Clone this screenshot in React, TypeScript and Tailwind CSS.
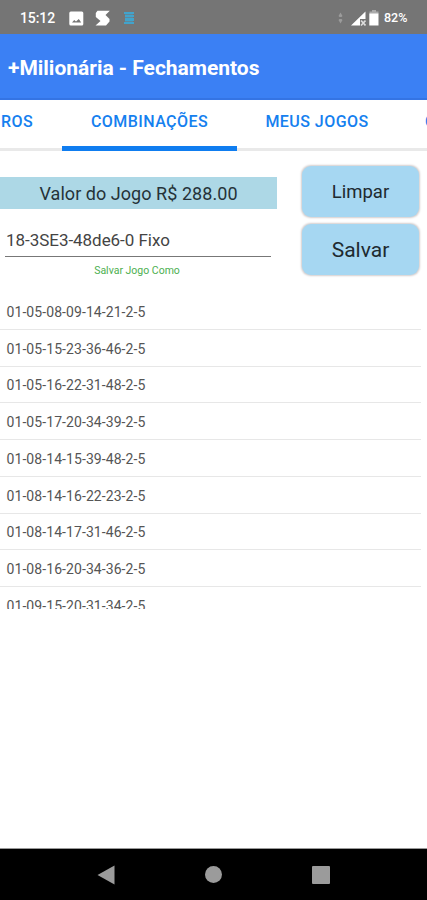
import React from 'react';

const games: string[] = [
  '01-05-08-09-14-21-2-5',
  '01-05-15-23-36-46-2-5',
  '01-05-16-22-31-48-2-5',
  '01-05-17-20-34-39-2-5',
  '01-08-14-15-39-48-2-5',
  '01-08-14-16-22-23-2-5',
  '01-08-14-17-31-46-2-5',
  '01-08-16-20-34-36-2-5',
  '01-09-15-20-31-34-2-5',
];

function StatusBar() {
  return (
    <div className="flex h-[34px] shrink-0 items-center bg-[#757575] pt-[2px] pl-5 text-white">
      <span className="w-9 text-[14px] font-medium tracking-[-0.1px] whitespace-nowrap">15:12</span>
      <svg className="ml-[13px] h-[15px] w-[15px]" viewBox="0 0 15 15">
        <rect x="0.3" y="0.5" width="14" height="14" rx="1.5" fill="#fff" />
        <path d="M3 11.5 5.2 9l1.8 1.5L9.8 8l2.4 3.5z" fill="#757575" />
      </svg>
      <svg className="ml-[11px] h-[16px] w-[16px]" viewBox="0 0 16 16">
        <path d="M2.5.8H14.8L10.5 5l4 4v2.5l-3.5 4H.5L5.5 11 .8 7V3z" fill="#fff" />
      </svg>
      <svg className="ml-[13px] h-[14px] w-[11px]" viewBox="0 0 11 14">
        <path d="M0 1h10v2H0zM1 4h9v2H1zM1 7h9v3H1zM0 11h10v2H0z" fill="#42a3cb" />
        <path d="M1 3h8v1H1zM1 6h8v1H1zM1 10h8v1H1z" fill="#60879a" />
      </svg>
      <div className="ml-auto flex items-center pr-[18px]">
        <svg className="mr-2 h-[12px] w-[5px]" viewBox="0 0 5 12">
          <path d="m.5 4 2-3.5 2 3.5-1 1h-2zM.5 8l2 3.5 2-3.5-1-1h-2z" fill="#9b9b9b" />
        </svg>
        <svg className="mr-[3px] h-[15px] w-[15px]" viewBox="0 0 15 15">
          <path d="M14.5.5V8H9v6.5H0z" fill="#fff" />
          <path d="m10 9.5 4.5 5m0-5-4.5 5" stroke="#ddd" strokeWidth="1.6" />
        </svg>
        <svg className="mr-[5px] h-[16px] w-[10px]" viewBox="0 0 10 16">
          <path d="M3 0h4v1.5h2.5V4h-9V1.5H3z" fill="#aaa" />
          <path d="M.3 3.5h9.2v12H.3z" fill="#fff" />
        </svg>
        <span className="w-[25px] text-[12.5px] font-medium whitespace-nowrap">82%</span>
      </div>
    </div>
  );
}

function Tabs() {
  return (
    <nav className="flex h-[51px] shrink-0 overflow-hidden text-[16px] font-medium tracking-[0.45px] whitespace-nowrap text-[#1580ef]">
      <div className="w-[62px] shrink-0 border-b-[3px] border-[#e9e9e9] pt-[10px] pl-[1px]">ROS</div>
      <div className="w-[175px] shrink-0 border-b-[5px] border-[#0f7df0] pt-[10px] text-center">COMBINAÇÕES</div>
      <div className="w-[160px] shrink-0 border-b-[3px] border-[#e9e9e9] pt-[10px] text-center">MEUS JOGOS</div>
      <div className="w-[30px] shrink-0 overflow-hidden border-b-[3px] border-[#e9e9e9] pt-[10px] pl-7">C</div>
    </nav>
  );
}

function ActionButton({ label, size }: { label: string; size: string }) {
  return (
    <button className={`h-[51px] w-[117px] rounded-[9px] bg-[#a6d7f2] pt-[2px] text-[#202a30] shadow-[0_0_2px_0.5px_#d3cdcd] ${size}`}>
      {label}
    </button>
  );
}

export default function App() {
  return (
    <div className="flex h-[900px] w-[427px] flex-col overflow-hidden bg-white font-['Roboto','Noto_Sans',sans-serif]">
      <StatusBar />
      <header className="flex h-[66px] shrink-0 items-center border-b-2 border-[#3474e4] bg-[#3b80f4] pt-[5px] pl-2 text-[21px] font-bold tracking-[-0.02px] whitespace-nowrap text-white">
        +Milionária - Fechamentos
      </header>
      <Tabs />
      <section className="flex h-[142px] shrink-0">
        <div className="w-[277px] pt-[26px]">
          <div className="flex h-[32px] items-center justify-center bg-[#add8e6] pt-px text-[18px] tracking-[0.05px] whitespace-nowrap text-[#253238]">
            Valor do Jogo R$ 288.00
          </div>
          <div className="mr-[6px] ml-[5px] flex h-[48px] items-end border-b border-[#777] pb-[3px] pl-px text-[17px] tracking-[-0.04px] whitespace-nowrap text-[#444]">
            18-3SE3-48de6-0 Fixo
          </div>
          <div className="pt-[6px] pr-[3px] text-center text-[10.5px] leading-[16px] text-[#4caf50]">Salvar Jogo Como</div>
        </div>
        <div className="flex flex-col gap-[7px] pt-[15px] pl-[25px]">
          <ActionButton label="Limpar" size="text-[18.5px]" />
          <ActionButton label="Salvar" size="text-[21px]" />
        </div>
      </section>
      <ul className="h-[315.5px] w-[421px] shrink-0 overflow-hidden">
        {games.map((game) => (
          <li key={game} className="flex h-[36.75px] items-center border-b-[1.5px] border-[#e7e7e7] pt-[3px] pl-[6.5px] text-[14px] tracking-[0.08px] text-[#555]">
            {game}
          </li>
        ))}
      </ul>
      <footer className="mt-auto flex h-[52px] shrink-0 items-center justify-between border-t border-[#999] bg-black pr-[97px] pl-[97px]">
        <svg className="h-5 w-[18px]" viewBox="0 0 18 20">
          <path d="M.5 10 17.5.5v19z" fill="#9b9b9b" />
        </svg>
        <div className="h-[17px] w-[17px] rounded-full bg-[#9b9b9b]" />
        <div className="h-[18px] w-[18px] rounded-[1px] bg-[#9b9b9b]" />
      </footer>
    </div>
  );
}
